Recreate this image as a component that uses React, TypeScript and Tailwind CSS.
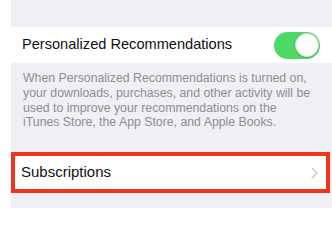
import React from "react";

const Toggle: React.FC<{ on?: boolean }> = ({ on = true }) => (
  <div
    className={`relative w-[46px] h-[27px] rounded-full ${
      on ? "bg-[#4cd964]" : "bg-[#e5e5ea]"
    }`}
  >
    <div className="absolute top-[1.5px] right-[1.5px] w-[24px] h-[24px] rounded-full bg-white border border-[#d8d8d8] shadow-[0_1px_2px_rgba(0,0,0,0.15)]" />
  </div>
);

const Chevron: React.FC = () => (
  <svg width="7" height="12" viewBox="0 0 7 12" fill="none">
    <path
      d="M1 1l5 5-5 5"
      stroke="#c7c7cc"
      strokeWidth="1.4"
      strokeLinecap="round"
      strokeLinejoin="round"
    />
  </svg>
);

export default function App() {
  return (
    <div
      className="w-[332px] h-[208px] bg-white pl-[11px] overflow-hidden"
      style={{ fontFamily: '"Liberation Sans", Arial, sans-serif' }}
    >
      <div className="h-full bg-[#efeff4] flex flex-col">
        {/* top spacer */}
        <div className="h-[27px] shrink-0" />

        {/* toggle row */}
        <div className="h-[36px] shrink-0 bg-white flex items-center justify-between pl-[11px] pr-[12px]">
          <span className="text-[14.6px] text-[#111]">
            Personalized Recommendations
          </span>
          <Toggle />
        </div>

        {/* footer text */}
        <p className="pt-[8px] pl-[12px] pr-[10px] text-[12.3px] leading-[14.8px] text-[#8e8e93]">
          When Personalized Recommendations is turned on,
          <br />
          your downloads, purchases, and other activity will be
          <br />
          used to improve your recommendations on the
          <br />
          iTunes Store, the App Store, and Apple Books.
        </p>

        {/* highlighted row */}
        <div className="mt-[22px] mr-[2px] h-[41px] shrink-0 border-4 border-[#f2341e] bg-white flex items-center justify-between pl-[6px] pr-[8px]">
          <span className="text-[15px] text-[#111]">Subscriptions</span>
          <Chevron />
        </div>
      </div>
    </div>
  );
}
